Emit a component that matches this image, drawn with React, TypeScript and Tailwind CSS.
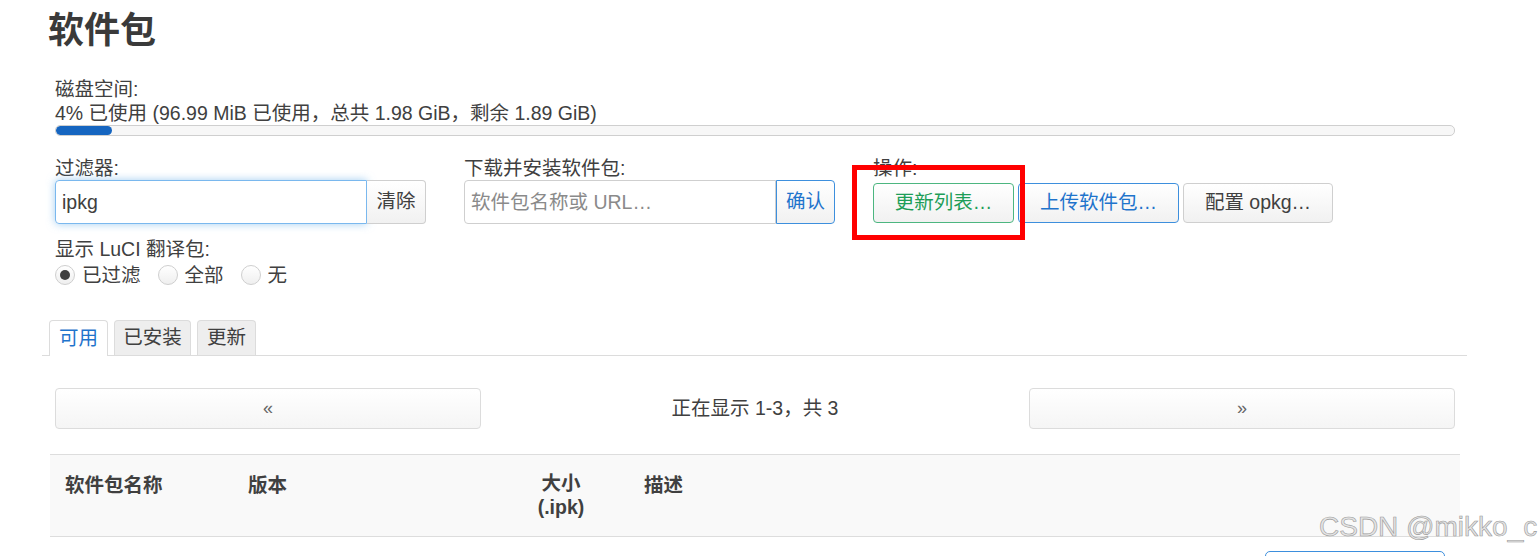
import { useState } from "react";

const FONT = "font-['Liberation_Sans','Noto_Sans_CJK_SC',sans-serif]";

function Btn({
  children,
  tone = "gray",
  className = "",
}: {
  children: React.ReactNode;
  tone?: "gray" | "green" | "blue";
  className?: string;
}) {
  const toneCls =
    tone === "green"
      ? "border-[#4cb680] text-[#1e9e58]"
      : tone === "blue"
        ? "border-[#3d8fdd] text-[#1f74cc]"
        : "border-[#cfcfcf] text-[#404040]";
  return (
    <button
      className={`h-[40px] rounded-[4px] border bg-gradient-to-b from-white to-[#f1f1f1] text-[19.5px] ${toneCls} ${className}`}
    >
      {children}
    </button>
  );
}

function Radio({ checked, label }: { checked?: boolean; label: string }) {
  return (
    <label className="flex items-center gap-[7px] mr-[17px]">
      <span className="w-[20px] h-[20px] rounded-full border border-[#cfcfcf] bg-gradient-to-b from-white to-[#efefef] flex items-center justify-center">
        {checked && <span className="w-[10px] h-[10px] rounded-full bg-[#404040]" />}
      </span>
      <span>{label}</span>
    </label>
  );
}

export default function App() {
  const [filter, setFilter] = useState("ipkg");

  return (
    <div className={`relative w-[1540px] h-[556px] overflow-hidden bg-white text-[#404040] ${FONT}`}>
      <h1 className="ml-[48px] pt-[9px] text-[36px] leading-[44px] font-bold text-[#3a3a3a]">
        软件包
      </h1>

      <div className="ml-[55px] w-[1400px] mt-[24px] text-[19.5px]">
        {/* 磁盘空间 */}
        <div className="leading-[24px]">磁盘空间:</div>
        <div className="leading-[24px]">
          4% 已使用 (96.99 MiB 已使用，总共 1.98 GiB，剩余 1.89 GiB)
        </div>
        <div className="h-[11px] rounded-[5px] border border-[#cfcfcf] bg-[#f7f7f7] overflow-hidden">
          <div className="h-full w-[56px] rounded-[5px] bg-[#1565c0]" />
        </div>

        {/* 过滤 / 安装 / 操作 */}
        <div className="mt-[20px] flex">
          <div className="w-[409px]">
            <div className="leading-[24px]">过滤器:</div>
            <div className="flex h-[44px]">
              <input
                value={filter}
                onChange={(e) => setFilter(e.target.value)}
                className="w-[312px] h-full rounded-l-[4px] border border-[#7ab8ee] px-[6px] text-[19.5px] text-[#404040] outline-none shadow-[0_0_8px_rgba(102,175,233,0.6)]"
              />
              <button className="w-[59px] h-full rounded-r-[4px] border border-l-0 border-[#cfcfcf] bg-gradient-to-b from-white to-[#f1f1f1] text-[19.5px]">
                清除
              </button>
            </div>
          </div>

          <div className="w-[408px]">
            <div className="leading-[24px]">下载并安装软件包:</div>
            <div className="flex h-[44px]">
              <input
                placeholder="软件包名称或 URL…"
                className="w-[312px] h-full rounded-l-[4px] border border-[#cfcfcf] px-[6px] text-[19.5px] outline-none placeholder:text-[#8a8a8a]"
              />
              <button className="w-[59px] h-full rounded-r-[4px] border border-[#3d8fdd] bg-gradient-to-b from-white to-[#f1f1f1] text-[19.5px] text-[#1f74cc]">
                确认
              </button>
            </div>
          </div>

          <div>
            <div className="leading-[24px] ml-[1px]">操作:</div>
            <div className="flex gap-[4px] mt-[3px] ml-[1px]">
              <Btn tone="green" className="w-[141px]">更新列表…</Btn>
              <Btn tone="blue" className="w-[161px]">上传软件包…</Btn>
              <Btn className="w-[150px]">配置 opkg…</Btn>
            </div>
          </div>
        </div>

        {/* LuCI 翻译包 */}
        <div className="mt-[13px] leading-[24px]">显示 LuCI 翻译包:</div>
        <div className="flex leading-[24px] mt-[2px]">
          <Radio checked label="已过滤" />
          <Radio label="全部" />
          <Radio label="无" />
        </div>
      </div>

      {/* Tabs */}
      <div className="ml-[42px] w-[1425px] mt-[33px] flex items-end gap-[6px] pl-[7px] border-b border-[#dcdcdc] h-[36px] text-[19.5px]">
        <div className="w-[59px] h-[36px] -mb-px rounded-t-[4px] border border-b-0 border-[#dcdcdc] bg-white text-[#1f74cc] flex items-center justify-center">
          可用
        </div>
        <div className="w-[77px] h-[35px] rounded-t-[4px] border border-b-0 border-[#dcdcdc] bg-[#eeeeee] flex items-center justify-center">
          已安装
        </div>
        <div className="w-[59px] h-[35px] rounded-t-[4px] border border-b-0 border-[#dcdcdc] bg-[#eeeeee] flex items-center justify-center">
          更新
        </div>
      </div>

      {/* Pager */}
      <div className="ml-[55px] w-[1400px] mt-[32px] flex items-center justify-between text-[19.5px]">
        <button className="w-[426px] h-[41px] rounded-[4px] border border-[#dcdcdc] bg-gradient-to-b from-white to-[#f5f5f5] text-[#666] text-[18px]">
          «
        </button>
        <div className="text-[#404040]">正在显示 1-3，共 3</div>
        <button className="w-[426px] h-[41px] rounded-[4px] border border-[#dcdcdc] bg-gradient-to-b from-white to-[#f5f5f5] text-[#666] text-[18px]">
          »
        </button>
      </div>

      {/* Table header */}
      <div className="ml-[50px] w-[1410px] mt-[25px] h-[83px] bg-[#f9f9f9] border-y border-[#dddddd] flex font-bold text-[19.5px] text-[#404040] pt-[16px]">
        <div className="w-[198px] pl-[15px]">软件包名称</div>
        <div className="w-[270px]">版本</div>
        <div className="w-[86px] text-center leading-[24px]">
          大小
          <br />
          (.ipk)
        </div>
        <div className="pl-[40px]">描述</div>
      </div>

      {/* partial button at bottom */}
      <div className="absolute left-[1265px] top-[551px] w-[180px] h-[20px] rounded-[5px] border border-[#3d8fdd] bg-white" />

      {/* annotation frame */}
      <div className="absolute left-[852px] top-[165px] w-[173px] h-[75px] border-[5px] border-[#ff0000]" />

      {/* watermark */}
      <div className="absolute left-[1319px] top-[509px] text-[28px] leading-[36px] font-['Liberation_Sans',sans-serif] [-webkit-text-stroke:0.6px_#9a9a9a] text-[#e4e4e4]">
        CSDN @mikko_c
      </div>
    </div>
  );
}
